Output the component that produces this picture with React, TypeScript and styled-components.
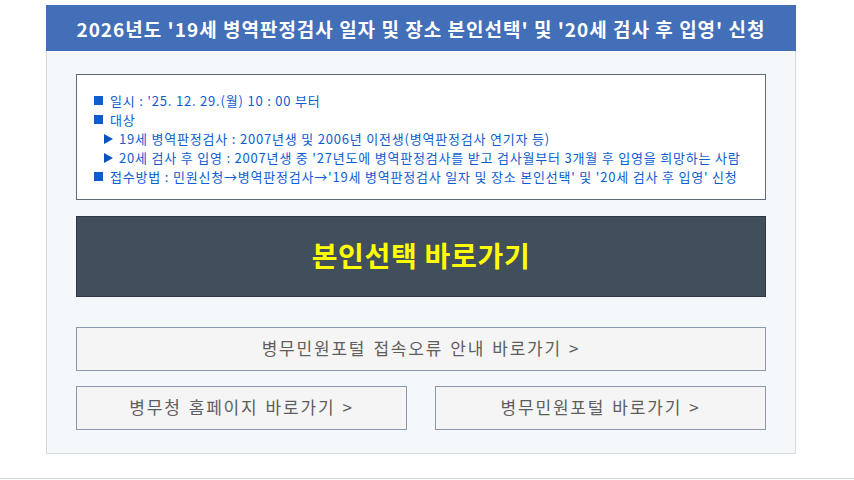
import React from "react";
import styled, { createGlobalStyle } from "styled-components";

const GlobalStyle = createGlobalStyle`
  body {
    margin: 0;
    background: #ffffff;
    font-family: "Noto Sans CJK KR", "Noto Sans", sans-serif;
  }
  * {
    box-sizing: border-box;
  }
`;

const Page = styled.div`
  padding-top: 5px;
`;

const Panel = styled.section`
  margin-left: 46px;
  width: 750px;
  border: 1px solid #d3dae4;
  border-top: none;
  background: #f5f8fb;
`;

const Header = styled.h1`
  margin: 0 -1px;
  height: 46px;
  display: flex;
  align-items: center;
  justify-content: center;
  background: #436eb8;
  color: #ffffff;
  font-size: 19px;
  font-weight: 700;
  letter-spacing: 1px;
  white-space: nowrap;
`;

const Body = styled.div`
  padding: 23px 29px 23px 29px;
  display: flex;
  flex-direction: column;
`;

const InfoBox = styled.ul`
  margin: 0;
  list-style: none;
  background: #ffffff;
  border: 1px solid #5f6b78;
  padding: 16px 16px 13px 17px;
  color: #0c5dd0;
  font-size: 13px;
  letter-spacing: 0.8px;
  line-height: 19px;
`;

const Item = styled.li<{ $sub?: boolean }>`
  display: flex;
  align-items: center;
  gap: ${(p) => (p.$sub ? "6px" : "7px")};
  padding-left: ${(p) => (p.$sub ? "10px" : "0")};
  white-space: nowrap;
`;

const Square = styled.span`
  width: 9px;
  height: 9px;
  background: #0c5dd0;
  flex: none;
`;

const Triangle = styled.span`
  width: 0;
  height: 0;
  border-top: 5px solid transparent;
  border-bottom: 5px solid transparent;
  border-left: 9px solid #0a52bf;
  flex: none;
`;

const MainButton = styled.a`
  margin-top: 16px;
  height: 81px;
  padding-bottom: 3px;
  display: flex;
  align-items: center;
  justify-content: center;
  background: #414e5c;
  border: 1px solid #2e3742;
  color: #ffff00;
  font-size: 28px;
  font-weight: 700;
  letter-spacing: 0.7px;
  text-decoration: none;
`;

const LinkButton = styled.a<{ $top?: number }>`
  margin-top: ${(p) => p.$top ?? 0}px;
  height: 44px;
  padding-bottom: 3px;
  display: flex;
  align-items: center;
  justify-content: center;
  background: #f5f5f5;
  border: 1px solid #8a99ae;
  color: #5e5e5e;
  font-size: 17px;
  letter-spacing: 1.8px;
  word-spacing: 1.5px;
  text-decoration: none;
`;

const Row = styled.div`
  margin-top: 15px;
  display: grid;
  grid-template-columns: 1fr 1fr;
  gap: 28px;
`;

const Divider = styled.div`
  margin-top: 24px;
  border-top: 1px solid #d0d7e2;
`;

const App = (): React.JSX.Element => {
  return (
    <Page>
      <GlobalStyle />
      <Panel>
        <Header>
          2026년도 '19세 병역판정검사 일자 및 장소 본인선택' 및 '20세 검사 후 입영' 신청
        </Header>
        <Body>
          <InfoBox>
            <Item>
              <Square />
              일시 : '25. 12. 29.(월) 10 : 00 부터
            </Item>
            <Item>
              <Square />
              대상
            </Item>
            <Item $sub>
              <Triangle />
              19세 병역판정검사 : 2007년생 및 2006년 이전생(병역판정검사 연기자 등)
            </Item>
            <Item $sub>
              <Triangle />
              20세 검사 후 입영 : 2007년생 중 '27년도에 병역판정검사를 받고 검사월부터 3개월 후 입영을 희망하는 사람
            </Item>
            <Item>
              <Square />
              접수방법 : 민원신청→병역판정검사→'19세 병역판정검사 일자 및 장소 본인선택' 및 '20세 검사 후 입영' 신청
            </Item>
          </InfoBox>
          <MainButton href="#">본인선택 바로가기</MainButton>
          <LinkButton href="#" $top={30}>
            병무민원포털 접속오류 안내 바로가기 &gt;
          </LinkButton>
          <Row>
            <LinkButton href="#">병무청 홈페이지 바로가기 &gt;</LinkButton>
            <LinkButton href="#">병무민원포털 바로가기 &gt;</LinkButton>
          </Row>
        </Body>
      </Panel>
      <Divider />
    </Page>
  );
};

export default App;
